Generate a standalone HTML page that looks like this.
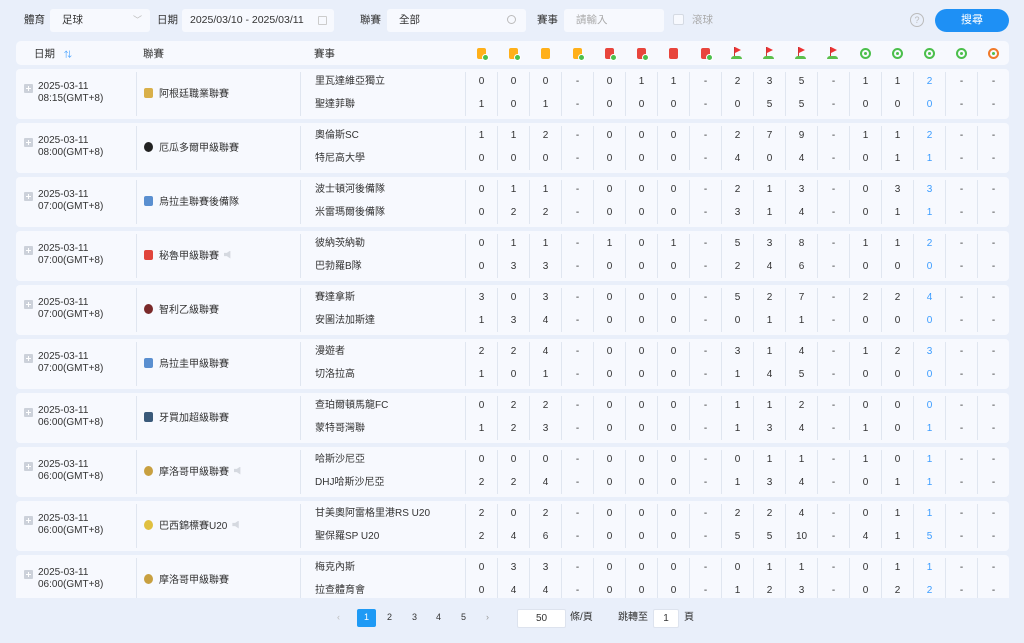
<!DOCTYPE html>
<html><head><meta charset="utf-8"><style>
*{box-sizing:border-box;margin:0;padding:0}
body{width:1024px;height:643px;overflow:hidden;background:#e9effa;font-family:"Liberation Sans","Noto Sans CJK TC",sans-serif;color:#333;font-size:10px;position:relative}
.lbl{position:absolute;top:12px;font-size:10.5px;color:#333}
.inp{position:absolute;top:9px;height:23px;background:#f7f9fe;border-radius:3px;font-size:10.5px;line-height:23px;padding-left:12px;color:#333}
.btn{position:absolute;left:935px;top:9px;width:74px;height:23px;border-radius:12px;background:#1e90f5;color:#fff;font-size:11px;line-height:23px;text-align:center}
.hdr{position:absolute;left:16px;top:41px;width:993px;height:24px;background:#f7f9fe;border-radius:5px;display:flex;align-items:center}
.wrap{position:absolute;left:0;top:0;width:1024px;height:598px;overflow:hidden}
.r{position:absolute;left:16px;width:993px;height:50px;background:#f7f9fe;border-radius:4px;display:flex}
.d{width:120px;padding:12px 0 0 22px;line-height:12px;font-size:10px;position:relative}
.d i{position:absolute;left:8px;top:15px;width:9px;height:9px;background:#ccd1da;border-radius:1px}
.d i:before{content:"";position:absolute;left:2px;top:4px;width:5px;height:1px;background:#fff}
.d i:after{content:"";position:absolute;left:4px;top:2px;width:1px;height:5px;background:#fff}
.l{width:164px;display:flex;align-items:center;padding-left:7px;padding-bottom:3px;font-size:10px;border-left:1px solid #e0e6f0;margin:3px 0}
.lg{width:9px;height:10px;border-radius:2px;margin-right:6px;display:inline-block}
.sp{display:inline-block;width:8px;height:8px;margin-left:5px;background:#d5d9e0;clip-path:polygon(0 30%,35% 30%,80% 0,80% 100%,35% 70%,0 70%)}
.m{width:165px;border-left:1px solid #e0e6f0;margin:3px 0;padding-left:14px}
.m p{height:23px;line-height:20px;font-size:10px}
.s{width:32px;border-left:1px solid #e0e6f0;margin:3px 0;text-align:center}
.s p{height:23px;line-height:20px;font-size:10px}
.b p{color:#3b9cff}
.h{width:32px;display:flex;justify-content:center}
.ic{width:9px;height:11px;border-radius:2px;position:relative}
.ic u{position:absolute;right:-3px;bottom:-2px;width:7px;height:7px;border-radius:50%;background:#4bbf4b;border:1px solid #fff}
.gc{width:11px;height:11px;border-radius:50%;border:2px solid #4bbf4b;position:relative}
.gc:after{content:"";position:absolute;left:2px;top:2px;width:3px;height:3px;border-radius:50%;background:#4bbf4b}
.fl{width:12px;height:12px;position:relative}
.fl:before{content:"";position:absolute;left:3px;top:0;width:1px;height:11px;background:#c33}
.fl:after{content:"";position:absolute;left:4px;top:0;width:0;height:0;border-left:6px solid #e33;border-top:3px solid transparent;border-bottom:3px solid transparent}
.fl u{position:absolute;left:0;bottom:0;width:11px;height:3px;background:#5bbf4b;border-radius:3px 3px 0 0}
.pg{position:absolute;top:609px;font-size:9px;line-height:17px;text-align:center;color:#333}
</style></head><body>
<div class="lbl" style="left:24px">體育</div>
<div class="inp" style="left:50px;width:100px">足球<span style="position:absolute;right:8px;color:#bbb;font-size:9px">﹀</span></div>
<div class="lbl" style="left:157px">日期</div>
<div class="inp" style="left:182px;width:152px;padding-left:8px">2025/03/10 - 2025/03/11<span style="position:absolute;right:7px;top:7px;width:9px;height:9px;border:1px solid #ccc;border-radius:1px"></span></div>
<div class="lbl" style="left:360px">聯賽</div>
<div class="inp" style="left:387px;width:139px">全部<span style="position:absolute;right:10px;top:6px;width:9px;height:9px;border:1px solid #bbb;border-radius:50%"></span></div>
<div class="lbl" style="left:537px">賽事</div>
<div class="inp" style="left:564px;width:100px;color:#aaa">請輸入</div>
<div style="position:absolute;left:673px;top:14px;width:11px;height:11px;border:1px solid #d5dae3;background:#f7f9fe;border-radius:2px"></div>
<div class="lbl" style="left:692px;color:#aaa">滾球</div>
<div style="position:absolute;left:910px;top:13px;width:14px;height:14px;border:1px solid #bbb;border-radius:50%;color:#bbb;font-size:9px;text-align:center;line-height:12px">?</div>
<div class="btn">搜尋</div>

<div class="hdr">
<div style="width:120px;padding-left:18px;font-size:10.5px">日期 <span style="color:#3b9cff;font-size:8px;margin-left:6px">⇅</span></div>
<div style="width:164px;padding-left:7px;font-size:10.5px">聯賽</div>
<div style="width:165px;padding-left:14px;font-size:10.5px">賽事</div>
<div class="h"><div class="ic" style="background:#ffb01a"><u></u></div></div>
<div class="h"><div class="ic" style="background:#ffb01a"><u></u></div></div>
<div class="h"><div class="ic" style="background:#ffb01a"></div></div>
<div class="h"><div class="ic" style="background:#ffb01a"><u></u></div></div>
<div class="h"><div class="ic" style="background:#e8453c"><u></u></div></div>
<div class="h"><div class="ic" style="background:#e8453c"><u></u></div></div>
<div class="h"><div class="ic" style="background:#e8453c"></div></div>
<div class="h"><div class="ic" style="background:#e8453c"><u></u></div></div>
<div class="h"><div class="fl"><u></u></div></div>
<div class="h"><div class="fl"><u></u></div></div>
<div class="h"><div class="fl"><u></u></div></div>
<div class="h"><div class="fl"><u></u></div></div>
<div class="h"><div class="gc"></div></div>
<div class="h"><div class="gc"></div></div>
<div class="h"><div class="gc"></div></div>
<div class="h"><div class="gc"></div></div>
<div class="h"><div class="gc" style="border-color:#f07a2a"></div></div>
</div>

<div class="wrap">
<div class="r" style="top:69px"><div class="d"><i></i>2025-03-11<br>08:15(GMT+8)</div><div class="l"><b class="lg" style="background:#d9b04a"></b>阿根廷職業聯賽</div><div class="m"><p>里瓦達維亞獨立</p><p>聖達菲聯</p></div>
<div class="s"><p>0</p><p>1</p></div><div class="s"><p>0</p><p>0</p></div><div class="s"><p>0</p><p>1</p></div><div class="s"><p>-</p><p>-</p></div><div class="s"><p>0</p><p>0</p></div><div class="s"><p>1</p><p>0</p></div><div class="s"><p>1</p><p>0</p></div><div class="s"><p>-</p><p>-</p></div><div class="s"><p>2</p><p>0</p></div><div class="s"><p>3</p><p>5</p></div><div class="s"><p>5</p><p>5</p></div><div class="s"><p>-</p><p>-</p></div><div class="s"><p>1</p><p>0</p></div><div class="s"><p>1</p><p>0</p></div><div class="s b"><p>2</p><p>0</p></div><div class="s"><p>-</p><p>-</p></div><div class="s"><p>-</p><p>-</p></div></div>

<div class="r" style="top:123px"><div class="d"><i></i>2025-03-11<br>08:00(GMT+8)</div><div class="l"><b class="lg" style="background:#222;border-radius:50%"></b>厄瓜多爾甲級聯賽</div><div class="m"><p>奧倫斯SC</p><p>特尼高大學</p></div>
<div class="s"><p>1</p><p>0</p></div><div class="s"><p>1</p><p>0</p></div><div class="s"><p>2</p><p>0</p></div><div class="s"><p>-</p><p>-</p></div><div class="s"><p>0</p><p>0</p></div><div class="s"><p>0</p><p>0</p></div><div class="s"><p>0</p><p>0</p></div><div class="s"><p>-</p><p>-</p></div><div class="s"><p>2</p><p>4</p></div><div class="s"><p>7</p><p>0</p></div><div class="s"><p>9</p><p>4</p></div><div class="s"><p>-</p><p>-</p></div><div class="s"><p>1</p><p>0</p></div><div class="s"><p>1</p><p>1</p></div><div class="s b"><p>2</p><p>1</p></div><div class="s"><p>-</p><p>-</p></div><div class="s"><p>-</p><p>-</p></div></div>

<div class="r" style="top:177px"><div class="d"><i></i>2025-03-11<br>07:00(GMT+8)</div><div class="l"><b class="lg" style="background:#5a8fd0"></b>烏拉圭聯賽後備隊</div><div class="m"><p>波士頓河後備隊</p><p>米雷瑪爾後備隊</p></div>
<div class="s"><p>0</p><p>0</p></div><div class="s"><p>1</p><p>2</p></div><div class="s"><p>1</p><p>2</p></div><div class="s"><p>-</p><p>-</p></div><div class="s"><p>0</p><p>0</p></div><div class="s"><p>0</p><p>0</p></div><div class="s"><p>0</p><p>0</p></div><div class="s"><p>-</p><p>-</p></div><div class="s"><p>2</p><p>3</p></div><div class="s"><p>1</p><p>1</p></div><div class="s"><p>3</p><p>4</p></div><div class="s"><p>-</p><p>-</p></div><div class="s"><p>0</p><p>0</p></div><div class="s"><p>3</p><p>1</p></div><div class="s b"><p>3</p><p>1</p></div><div class="s"><p>-</p><p>-</p></div><div class="s"><p>-</p><p>-</p></div></div>

<div class="r" style="top:231px"><div class="d"><i></i>2025-03-11<br>07:00(GMT+8)</div><div class="l"><b class="lg" style="background:#e0453c"></b>秘魯甲級聯賽<span class="sp"></span></div><div class="m"><p>彼納茨納勒</p><p>巴勃羅B隊</p></div>
<div class="s"><p>0</p><p>0</p></div><div class="s"><p>1</p><p>3</p></div><div class="s"><p>1</p><p>3</p></div><div class="s"><p>-</p><p>-</p></div><div class="s"><p>1</p><p>0</p></div><div class="s"><p>0</p><p>0</p></div><div class="s"><p>1</p><p>0</p></div><div class="s"><p>-</p><p>-</p></div><div class="s"><p>5</p><p>2</p></div><div class="s"><p>3</p><p>4</p></div><div class="s"><p>8</p><p>6</p></div><div class="s"><p>-</p><p>-</p></div><div class="s"><p>1</p><p>0</p></div><div class="s"><p>1</p><p>0</p></div><div class="s b"><p>2</p><p>0</p></div><div class="s"><p>-</p><p>-</p></div><div class="s"><p>-</p><p>-</p></div></div>

<div class="r" style="top:285px"><div class="d"><i></i>2025-03-11<br>07:00(GMT+8)</div><div class="l"><b class="lg" style="background:#7a2a2a;border-radius:50%"></b>智利乙級聯賽</div><div class="m"><p>賽達拿斯</p><p>安圖法加斯達</p></div>
<div class="s"><p>3</p><p>1</p></div><div class="s"><p>0</p><p>3</p></div><div class="s"><p>3</p><p>4</p></div><div class="s"><p>-</p><p>-</p></div><div class="s"><p>0</p><p>0</p></div><div class="s"><p>0</p><p>0</p></div><div class="s"><p>0</p><p>0</p></div><div class="s"><p>-</p><p>-</p></div><div class="s"><p>5</p><p>0</p></div><div class="s"><p>2</p><p>1</p></div><div class="s"><p>7</p><p>1</p></div><div class="s"><p>-</p><p>-</p></div><div class="s"><p>2</p><p>0</p></div><div class="s"><p>2</p><p>0</p></div><div class="s b"><p>4</p><p>0</p></div><div class="s"><p>-</p><p>-</p></div><div class="s"><p>-</p><p>-</p></div></div>

<div class="r" style="top:339px"><div class="d"><i></i>2025-03-11<br>07:00(GMT+8)</div><div class="l"><b class="lg" style="background:#5a8fd0"></b>烏拉圭甲級聯賽</div><div class="m"><p>漫遊者</p><p>切洛拉高</p></div>
<div class="s"><p>2</p><p>1</p></div><div class="s"><p>2</p><p>0</p></div><div class="s"><p>4</p><p>1</p></div><div class="s"><p>-</p><p>-</p></div><div class="s"><p>0</p><p>0</p></div><div class="s"><p>0</p><p>0</p></div><div class="s"><p>0</p><p>0</p></div><div class="s"><p>-</p><p>-</p></div><div class="s"><p>3</p><p>1</p></div><div class="s"><p>1</p><p>4</p></div><div class="s"><p>4</p><p>5</p></div><div class="s"><p>-</p><p>-</p></div><div class="s"><p>1</p><p>0</p></div><div class="s"><p>2</p><p>0</p></div><div class="s b"><p>3</p><p>0</p></div><div class="s"><p>-</p><p>-</p></div><div class="s"><p>-</p><p>-</p></div></div>

<div class="r" style="top:393px"><div class="d"><i></i>2025-03-11<br>06:00(GMT+8)</div><div class="l"><b class="lg" style="background:#3a5a7a"></b>牙買加超級聯賽</div><div class="m"><p>查珀爾頓馬龍FC</p><p>蒙特哥灣聯</p></div>
<div class="s"><p>0</p><p>1</p></div><div class="s"><p>2</p><p>2</p></div><div class="s"><p>2</p><p>3</p></div><div class="s"><p>-</p><p>-</p></div><div class="s"><p>0</p><p>0</p></div><div class="s"><p>0</p><p>0</p></div><div class="s"><p>0</p><p>0</p></div><div class="s"><p>-</p><p>-</p></div><div class="s"><p>1</p><p>1</p></div><div class="s"><p>1</p><p>3</p></div><div class="s"><p>2</p><p>4</p></div><div class="s"><p>-</p><p>-</p></div><div class="s"><p>0</p><p>1</p></div><div class="s"><p>0</p><p>0</p></div><div class="s b"><p>0</p><p>1</p></div><div class="s"><p>-</p><p>-</p></div><div class="s"><p>-</p><p>-</p></div></div>

<div class="r" style="top:447px"><div class="d"><i></i>2025-03-11<br>06:00(GMT+8)</div><div class="l"><b class="lg" style="background:#c8a040;border-radius:50%"></b>摩洛哥甲級聯賽<span class="sp"></span></div><div class="m"><p>哈斯沙尼亞</p><p>DHJ哈斯沙尼亞</p></div>
<div class="s"><p>0</p><p>2</p></div><div class="s"><p>0</p><p>2</p></div><div class="s"><p>0</p><p>4</p></div><div class="s"><p>-</p><p>-</p></div><div class="s"><p>0</p><p>0</p></div><div class="s"><p>0</p><p>0</p></div><div class="s"><p>0</p><p>0</p></div><div class="s"><p>-</p><p>-</p></div><div class="s"><p>0</p><p>1</p></div><div class="s"><p>1</p><p>3</p></div><div class="s"><p>1</p><p>4</p></div><div class="s"><p>-</p><p>-</p></div><div class="s"><p>1</p><p>0</p></div><div class="s"><p>0</p><p>1</p></div><div class="s b"><p>1</p><p>1</p></div><div class="s"><p>-</p><p>-</p></div><div class="s"><p>-</p><p>-</p></div></div>

<div class="r" style="top:501px"><div class="d"><i></i>2025-03-11<br>06:00(GMT+8)</div><div class="l"><b class="lg" style="background:#e0c040;border-radius:50%"></b>巴西錦標賽U20<span class="sp"></span></div><div class="m"><p>甘美奧阿雷格里港RS U20</p><p>聖保羅SP U20</p></div>
<div class="s"><p>2</p><p>2</p></div><div class="s"><p>0</p><p>4</p></div><div class="s"><p>2</p><p>6</p></div><div class="s"><p>-</p><p>-</p></div><div class="s"><p>0</p><p>0</p></div><div class="s"><p>0</p><p>0</p></div><div class="s"><p>0</p><p>0</p></div><div class="s"><p>-</p><p>-</p></div><div class="s"><p>2</p><p>5</p></div><div class="s"><p>2</p><p>5</p></div><div class="s"><p>4</p><p>10</p></div><div class="s"><p>-</p><p>-</p></div><div class="s"><p>0</p><p>4</p></div><div class="s"><p>1</p><p>1</p></div><div class="s b"><p>1</p><p>5</p></div><div class="s"><p>-</p><p>-</p></div><div class="s"><p>-</p><p>-</p></div></div>

<div class="r" style="top:555px"><div class="d"><i></i>2025-03-11<br>06:00(GMT+8)</div><div class="l"><b class="lg" style="background:#c8a040;border-radius:50%"></b>摩洛哥甲級聯賽</div><div class="m"><p>梅克內斯</p><p>拉查體育會</p></div>
<div class="s"><p>0</p><p>0</p></div><div class="s"><p>3</p><p>4</p></div><div class="s"><p>3</p><p>4</p></div><div class="s"><p>-</p><p>-</p></div><div class="s"><p>0</p><p>0</p></div><div class="s"><p>0</p><p>0</p></div><div class="s"><p>0</p><p>0</p></div><div class="s"><p>-</p><p>-</p></div><div class="s"><p>0</p><p>1</p></div><div class="s"><p>1</p><p>2</p></div><div class="s"><p>1</p><p>3</p></div><div class="s"><p>-</p><p>-</p></div><div class="s"><p>0</p><p>0</p></div><div class="s"><p>1</p><p>2</p></div><div class="s b"><p>1</p><p>2</p></div><div class="s"><p>-</p><p>-</p></div><div class="s"><p>-</p><p>-</p></div></div>
</div>

<div class="pg" style="left:337px;color:#bbb">‹</div>
<div class="pg" style="left:357px;width:19px;height:18px;background:#1e9af5;color:#fff;border-radius:2px">1</div>
<div class="pg" style="left:387px">2</div>
<div class="pg" style="left:412px">3</div>
<div class="pg" style="left:436px">4</div>
<div class="pg" style="left:461px">5</div>
<div class="pg" style="left:486px;color:#999">›</div>
<div class="pg" style="left:517px;width:49px;height:19px;background:#fff;border:1px solid #dde3ee;border-radius:2px;font-size:10px">50</div>
<div class="pg" style="left:570px;font-size:10px">條/頁</div>
<div class="pg" style="left:618px;font-size:10px">跳轉至</div>
<div class="pg" style="left:653px;width:26px;height:19px;background:#fff;border:1px solid #dde3ee;border-radius:2px;font-size:10px">1</div>
<div class="pg" style="left:684px;font-size:10px">頁</div>
</body></html>
